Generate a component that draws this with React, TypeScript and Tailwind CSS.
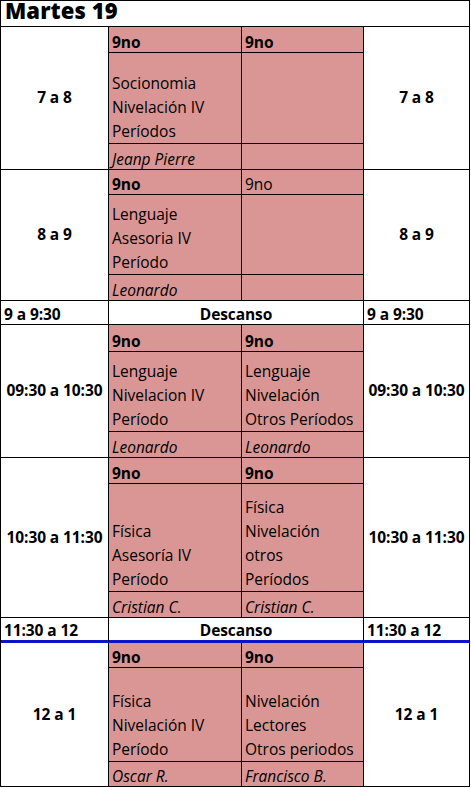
type Slot = {
  time: string
  cells: { head: string; headBold: boolean; body: string[]; teacher: string }[]
}

type Row = { kind: 'slot'; slot: Slot } | { kind: 'break'; time: string; blue?: boolean }

const ROWS: Row[] = [
  {
    kind: 'slot',
    slot: {
      time: '7 a 8',
      cells: [
        { head: '9no', headBold: true, body: ['Socionomia', 'Nivelación IV', 'Períodos'], teacher: 'Jeanp Pierre' },
        { head: '9no', headBold: true, body: [], teacher: '' },
      ],
    },
  },
  {
    kind: 'slot',
    slot: {
      time: '8 a 9',
      cells: [
        { head: '9no', headBold: true, body: ['Lenguaje', 'Asesoria IV', 'Período'], teacher: 'Leonardo' },
        { head: '9no', headBold: false, body: [], teacher: '' },
      ],
    },
  },
  { kind: 'break', time: '9 a 9:30' },
  {
    kind: 'slot',
    slot: {
      time: '09:30 a 10:30',
      cells: [
        { head: '9no', headBold: true, body: ['Lenguaje', 'Nivelacion IV', 'Período'], teacher: 'Leonardo' },
        { head: '9no', headBold: true, body: ['Lenguaje', 'Nivelación', 'Otros Períodos'], teacher: 'Leonardo' },
      ],
    },
  },
  {
    kind: 'slot',
    slot: {
      time: '10:30 a 11:30',
      cells: [
        { head: '9no', headBold: true, body: ['Física', 'Asesoría IV', 'Período'], teacher: 'Cristian C.' },
        { head: '9no', headBold: true, body: ['Física', 'Nivelación', 'otros', 'Períodos'], teacher: 'Cristian C.' },
      ],
    },
  },
  { kind: 'break', time: '11:30 a 12', blue: true },
  {
    kind: 'slot',
    slot: {
      time: '12 a 1',
      cells: [
        { head: '9no', headBold: true, body: ['Física', 'Nivelación IV', 'Período'], teacher: 'Oscar R.' },
        { head: '9no', headBold: true, body: ['Nivelación', 'Lectores', 'Otros periodos'], teacher: 'Francisco B.' },
      ],
    },
  },
]

const cell = 'border-r border-b border-black'
const pink = 'bg-[#da9694]'

function TimeCell({ time }: { time: string }) {
  return (
    <div className={`${cell} row-span-3 flex items-center justify-center font-bold text-[15.5px] tracking-[-0.1px]`}>
      {time}
    </div>
  )
}

export default function App() {
  return (
    <div className="w-[471px] h-[788px] bg-white text-black [font-family:'Open_Sans',sans-serif] text-[15.5px]">
      <div className="grid w-[470px] border-l border-t border-black grid-cols-[108px_133px_122px_106px] grid-rows-[26px_26px_91px_26px_25px_80px_26px_24px_27px_80px_26px_26px_108px_26px_25px_25px_94px_25px]">
        <div className={`${cell} col-span-4 flex items-start pl-[4px]`}>
          <span className="text-[22px] font-extrabold leading-[18px] tracking-[0.1px]">Martes 19</span>
        </div>

        {ROWS.map((row, i) => {
          if (row.kind === 'break') {
            const bb = row.blue ? 'border-b-[3px] border-b-[#0a14c8]' : ''
            return [
              <div key={`${i}a`} className={`${cell} ${bb} flex items-end pl-[3px] font-bold leading-[20px] tracking-[-0.1px]`}>{row.time}</div>,
              <div key={`${i}b`} className={`${cell} ${bb} col-span-2 flex items-end justify-center font-bold leading-[20px] tracking-[-0.1px]`}>Descanso</div>,
              <div key={`${i}c`} className={`${cell} ${bb} flex items-end pl-[3px] font-bold leading-[20px] tracking-[-0.1px]`}>{row.time}</div>,
            ]
          }
          const [a, b] = row.slot.cells
          return [
            <TimeCell key={`${i}t1`} time={row.slot.time} />,
            <div key={`${i}h1`} className={`${cell} ${pink} flex items-end pl-[3px] leading-[20px] ${a.headBold ? 'font-bold' : ''}`}>{a.head}</div>,
            <div key={`${i}h2`} className={`${cell} ${pink} flex items-end pl-[3px] leading-[20px] ${b.headBold ? 'font-bold' : ''}`}>{b.head}</div>,
            <TimeCell key={`${i}t2`} time={row.slot.time} />,
            <div key={`${i}b1`} className={`${cell} ${pink} flex flex-col justify-end pl-[3px] leading-[24px]`}>
              {a.body.map(l => <div key={l}>{l}</div>)}
            </div>,
            <div key={`${i}b2`} className={`${cell} ${pink} flex flex-col justify-end pl-[3px] leading-[24px]`}>
              {b.body.map(l => <div key={l}>{l}</div>)}
            </div>,
            <div key={`${i}n1`} className={`${cell} ${pink} flex items-end pl-[3px] leading-[20px] italic`}>{a.teacher}</div>,
            <div key={`${i}n2`} className={`${cell} ${pink} flex items-end pl-[3px] leading-[20px] italic`}>{b.teacher}</div>,
          ]
        })}
      </div>
    </div>
  )
}
